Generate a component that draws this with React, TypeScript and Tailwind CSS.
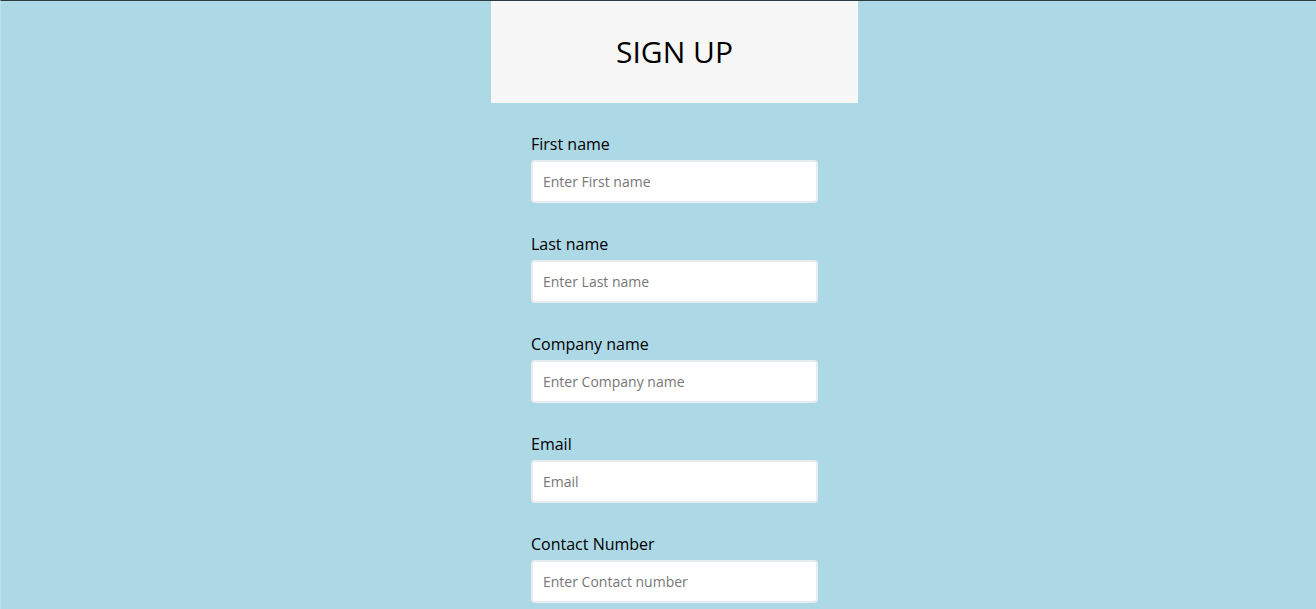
import React from "react";

const fields = [
  { label: "First name", placeholder: "Enter First name" },
  { label: "Last name", placeholder: "Enter Last name" },
  { label: "Company name", placeholder: "Enter Company name" },
  { label: "Email", placeholder: "Email" },
  { label: "Contact Number", placeholder: "Enter Contact number" },
];

export default function App() {
  return (
    <div
      className="min-h-screen w-full bg-[#add8e6] border-t border-[#2e3b40] border-l border-l-[#bfe0eb]"
      style={{ fontFamily: '"Open Sans", "Noto Sans", sans-serif' }}
    >
      <div className="ml-[490px] w-[367px]">
        <div className="h-[102px] bg-[#f7f7f7] flex items-center justify-center">
          <h1 className="text-[30px] leading-none text-black font-medium">SIGN UP</h1>
        </div>
        <form className="px-[40px] pt-[29px] flex flex-col gap-[29px]">
          {fields.map((f) => (
            <div key={f.label} className="flex flex-col">
              <label className="text-[16px] leading-[24px] text-black mb-[4px]">{f.label}</label>
              <input
                type="text"
                placeholder={f.placeholder}
                className="h-[43px] w-[287px] bg-white border-2 border-[#e8ecee] rounded-[4px] px-[10px] text-[14px] text-black placeholder:text-[#777] outline-none"
              />
            </div>
          ))}
        </form>
      </div>
    </div>
  );
}
